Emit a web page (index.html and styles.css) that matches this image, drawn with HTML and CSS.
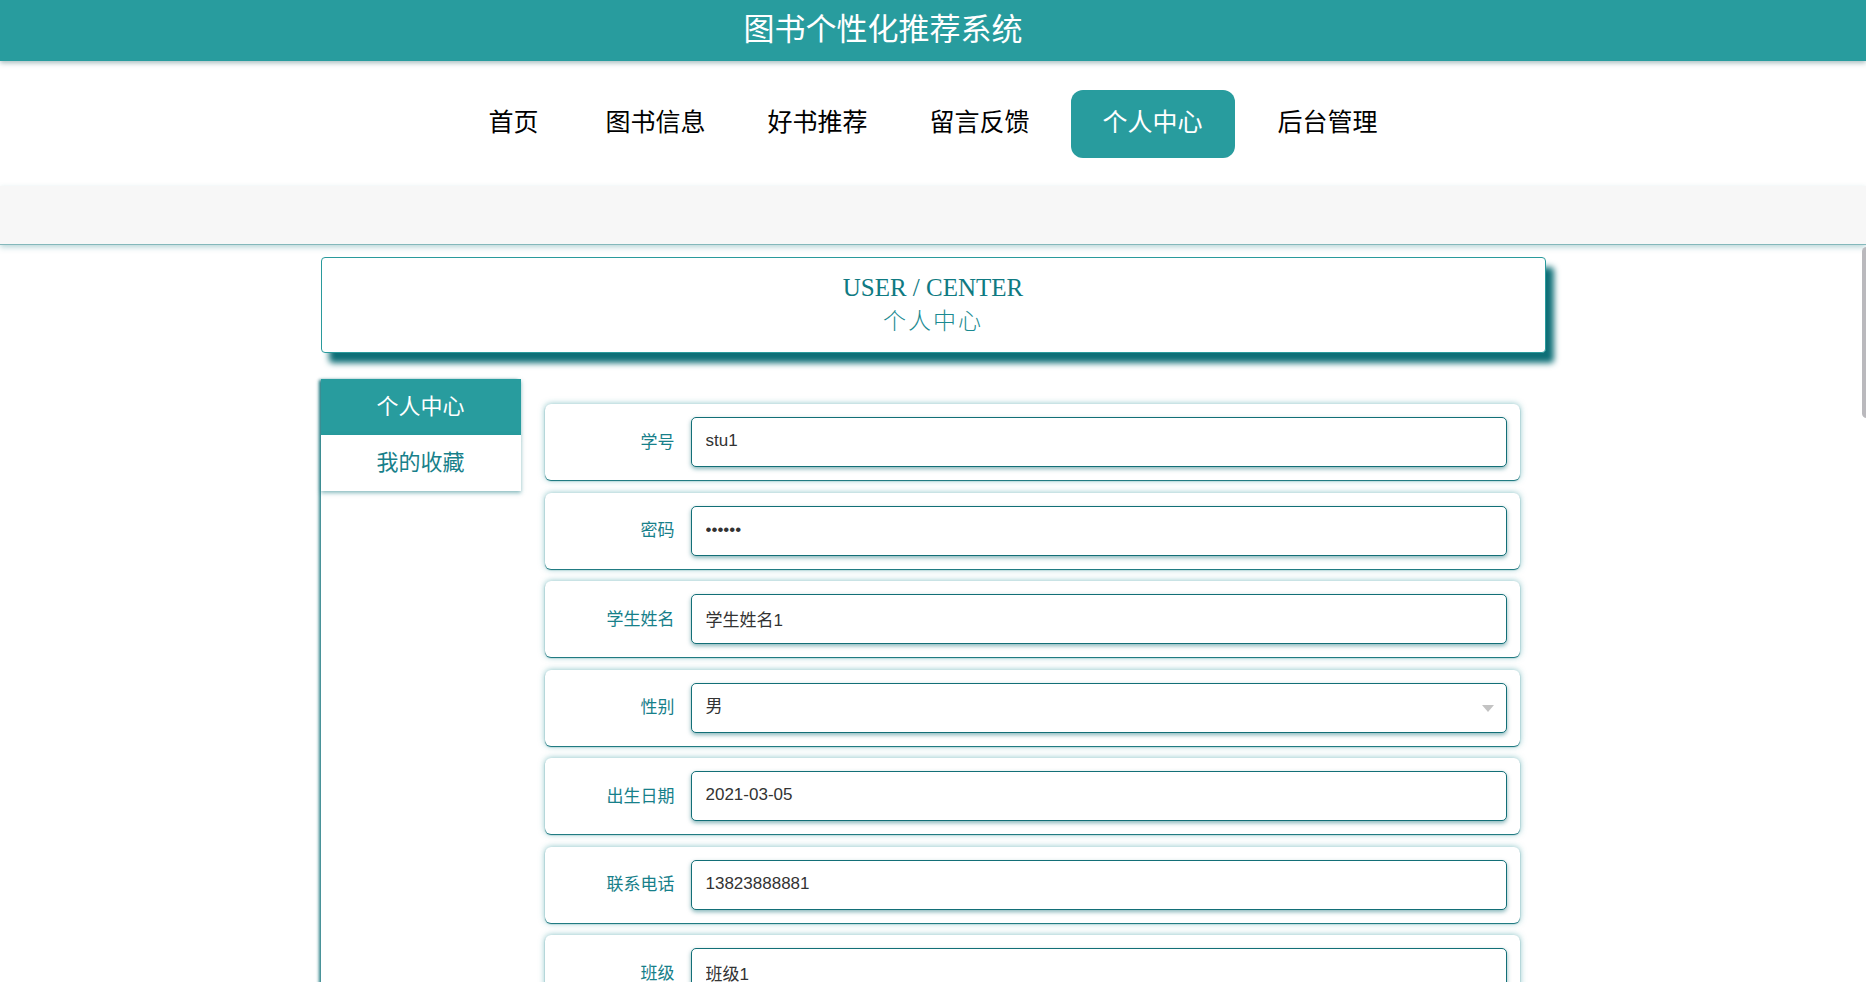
FILE: index.html
```html
<!DOCTYPE html>
<html>

<head>
  <title>图书个性化推荐系统 - 个人中心</title>
  <meta charset="utf-8">
  <link rel="stylesheet" href="styles.css">
</head>

<body>
  <div class="topbar">
    <h1>图书个性化推荐系统</h1>
  </div>

  <div class="nav">
    <a href="#" class="nav-item">首页</a>
    <a href="#" class="nav-item">图书信息</a>
    <a href="#" class="nav-item">好书推荐</a>
    <a href="#" class="nav-item">留言反馈</a>
    <a href="#" class="nav-item active">个人中心</a>
    <a href="#" class="nav-item">后台管理</a>
  </div>

  <div class="band"></div>

  <div class="container">
    <div class="page-title">
      <div class="en">USER / CENTER</div>
      <div class="cn">个人中心</div>
    </div>

    <div class="center-body">
      <div class="side-menu">
        <a href="#" class="side-item active">个人中心</a>
        <a href="#" class="side-item">我的收藏</a>
      </div>

      <form class="user-form">
        <div class="form-row">
          <label>学号</label>
          <input type="text" value="stu1">
        </div>
        <div class="form-row">
          <label>密码</label>
          <input type="password" value="123456">
        </div>
        <div class="form-row">
          <label>学生姓名</label>
          <input type="text" value="学生姓名1">
        </div>
        <div class="form-row">
          <label>性别</label>
          <div class="select-box">
            <select>
              <option>男</option>
              <option>女</option>
            </select>
            <span class="caret"></span>
          </div>
        </div>
        <div class="form-row">
          <label>出生日期</label>
          <input type="text" value="2021-03-05">
        </div>
        <div class="form-row">
          <label>联系电话</label>
          <input type="text" value="13823888881">
        </div>
        <div class="form-row">
          <label>班级</label>
          <input type="text" value="班级1">
        </div>
        <div class="form-actions">
          <button type="button" class="btn">更新信息</button>
          <button type="button" class="btn">退出登录</button>
        </div>
      </form>
    </div>
  </div>

  <div class="scroll-thumb"></div>
</body>

</html>
```

FILE: styles.css
```css
body {
  margin: 0;
  background: #fff;
  font-family: "Noto Sans CJK SC", "Microsoft YaHei", sans-serif;
  overflow: hidden;
}

.topbar {
  position: relative;
  z-index: 2;
  height: 61px;
  background-color: #289c9e;
  box-shadow: 0 2px 5px rgba(0, 60, 70, 0.35);
}

.topbar h1 {
  margin: 0;
  padding-right: 100px;
  font-size: 31px;
  font-weight: 400;
  line-height: 54px;
  color: #fff;
  text-align: center;
}

.nav {
  display: flex;
  justify-content: center;
  align-items: center;
  height: 125px;
  background: #fff;
}

.nav-item {
  box-sizing: border-box;
  height: 68px;
  padding: 0 31px;
  font-size: 25px;
  line-height: 61px;
  color: #000;
  text-decoration: none;
  border-radius: 12px;
}

.nav-item:first-child {
  padding-right: 36px;
}

.nav-item.active {
  margin: 0 12px 0 10px;
  padding: 0 32px;
  background-color: #289c9e;
  color: #fff;
}

.band {
  height: 58px;
  background-color: #f7f7f7;
  box-shadow: 0 1px 0 #84b8bb, 0 3px 6px rgba(40, 130, 135, 0.35);
}

.container {
  width: 1225px;
  margin: 13px auto 0;
}

.page-title {
  padding: 13px 0 17px;
  border: 1px solid #2a9a9c;
  border-radius: 4px;
  background: #fff;
  text-align: center;
  box-shadow: 8px 10px 6px #0e6f77;
}

.page-title .en {
  font-family: "Liberation Serif", "Times New Roman", serif;
  font-size: 25px;
  line-height: 33px;
  color: #0f7a82;
}

.page-title .cn {
  font-size: 23px;
  font-weight: 300;
  letter-spacing: 2px;
  line-height: 31px;
  color: #1a8a91;
}

.center-body {
  display: flex;
  margin-top: 26px;
}

.side-menu {
  flex-shrink: 0;
  width: 200px;
  min-height: 700px;
  box-shadow: -3px 0 3px -1px rgba(16, 112, 120, 0.9);
}

.side-item {
  display: block;
  height: 56px;
  font-size: 22px;
  line-height: 51px;
  color: #17808a;
  text-align: center;
  text-decoration: none;
  background: #fff;
  box-shadow: 0 2px 4px rgba(18, 118, 126, 0.5);
}

.side-item.active {
  background-color: #289c9e;
  color: #fff;
}

.user-form {
  flex: 1;
  padding: 25px 26px 0 24px;
}

.form-row {
  display: flex;
  align-items: center;
  box-sizing: border-box;
  height: 76px;
  padding-right: 13px;
  margin-bottom: 12.5px;
  border-radius: 6px;
  background: #fff;
  box-shadow: 0 1px 1px #0f6f77, 0 0 6px rgba(30, 140, 148, 0.55);
}

.form-row label {
  box-sizing: border-box;
  width: 146px;
  padding: 0 16px 4px 0;
  font-size: 17px;
  color: #17808a;
  text-align: right;
}

.form-row input,
.form-row select {
  flex: 1;
  box-sizing: border-box;
  width: 100%;
  height: 50px;
  padding: 0 14px 2px;
  border: 1px solid #136f77;
  border-radius: 5px;
  background: #fff;
  font-family: "Liberation Sans", Arial, "Noto Sans CJK SC", sans-serif;
  font-size: 17px;
  color: #333;
  outline: none;
  box-shadow: 0 2px 4px rgba(15, 110, 118, 0.5);
}

.form-row select {
  appearance: none;
  -webkit-appearance: none;
}

.select-box {
  position: relative;
  flex: 1;
}

.caret {
  position: absolute;
  right: 13px;
  top: 50%;
  margin-top: -3px;
  border-left: 6px solid transparent;
  border-right: 6px solid transparent;
  border-top: 7px solid #c3c3c3;
}

.form-actions {
  display: flex;
  justify-content: center;
  gap: 20px;
  padding: 20px 0;
}

.btn {
  padding: 10px 30px;
  border: none;
  border-radius: 6px;
  background-color: #289c9e;
  color: #fff;
  font-size: 16px;
  cursor: pointer;
}

.scroll-thumb {
  position: fixed;
  right: -5px;
  top: 247px;
  width: 9px;
  height: 171px;
  border-radius: 5px;
  background-color: #bab9bd;
}
```
